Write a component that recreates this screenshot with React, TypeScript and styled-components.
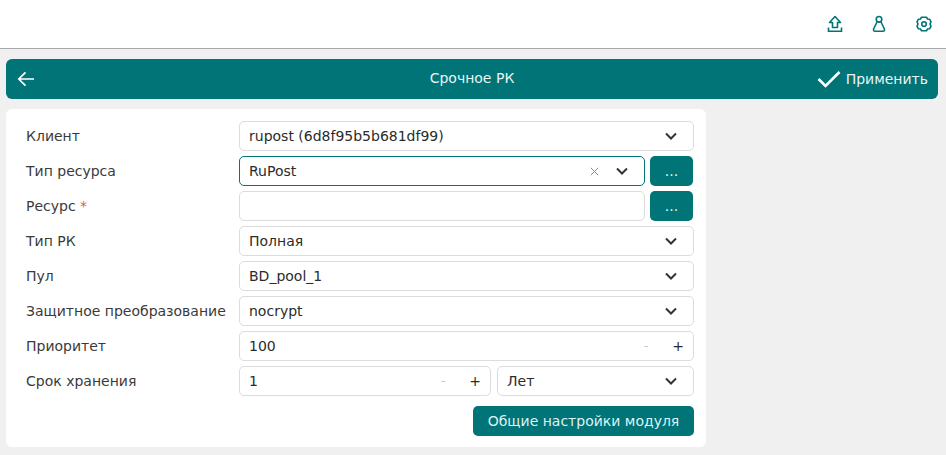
import React from "react";
import styled, { createGlobalStyle } from "styled-components";

const Global = createGlobalStyle`
  html, body { margin: 0; padding: 0; background: #f0f0f0; }
  body { font-family: "DejaVu Sans", sans-serif; font-size: 14px; color: #333; }
`;
const Page = styled.div`
  width: 946px; height: 455px; overflow: hidden; display: flex; flex-direction: column;
`;
const TopBar = styled.header`
  height: 48px; background: #fff; border-bottom: 1px solid #a8a8ac; display: flex;
  align-items: center; justify-content: flex-end; gap: 26px; padding-right: 13px; flex: none; color: #007476;
`;
const IconBox = styled.span`
  width: 18px; height: 18px; display: flex; align-items: center; justify-content: center;
`;
const Content = styled.main`
  padding: 10px 8px 0 6px; display: flex; flex-direction: column; gap: 10px;
`;
const TitleBar = styled.div`
  height: 40px; background: #007476; border-radius: 6px; color: #fff; display: grid;
  grid-template-columns: 1fr auto 1fr; align-items: center; padding: 0 10px 0 11px;
`;
const TitleText = styled.div` font-size: 14px; color: #e8f6f6; margin: -2px 1px 0 0; `;
const Apply = styled.div`
  justify-self: end; display: flex; align-items: center; gap: 5px; font-size: 14px; color: #e8f6f6;
`;
const Card = styled.section`
  width: 700px; height: 338px; box-sizing: border-box; background: #fff; border-radius: 6px;
  padding: 12px 12px 0 20px; display: flex; flex-direction: column; gap: 5px;
`;
const Row = styled.div`
  display: grid; grid-template-columns: 213px 1fr; align-items: center; height: 30px;
`;
const Label = styled.div` color: #3a3a3a; white-space: nowrap; `;
const Star = styled.span` color: #d9604c; `;
const Controls = styled.div` display: flex; gap: 5px; min-width: 0; `;
const SplitControls = styled(Controls)` gap: 6px; `;
const Field = styled.div<{ $focus?: boolean; $w?: number }>`
  height: 30px; box-sizing: border-box; border: 1px solid ${p => (p.$focus ? "#007476" : "#dcdcdc")};
  border-radius: 5px; background: #fff; display: flex; align-items: center; padding: 0 15px 0 9px;
  color: #2b2b2b; ${p => (p.$w ? `width: ${p.$w}px; flex: none;` : "flex: 1; min-width: 0;")}
`;
const Value = styled.span` flex: 1; white-space: nowrap; `;
const Clear = styled.span` display: flex; margin-right: 16px; color: #8a8a8a; `;
const Chevron = styled.span` display: flex; color: #333; `;
const Minus = styled.span` color: #c4c4c4; margin-right: 24px; font-size: 12px; `;
const Plus = styled.span` color: #2b2b2b; font-size: 14px; margin-right: -6px; `;
const Dots = styled.button`
  width: 43px; height: 30px; flex: none; border: 0; border-radius: 5px; background: #007476; color: #e8f6f6;
  font: 14px "DejaVu Sans", sans-serif; padding: 0;
`;
const Footer = styled.div` display: flex; justify-content: flex-end; margin-top: 5px; `;
const Primary = styled.button`
  height: 30px; width: 221px; border: 0; border-radius: 5px; background: #007476; color: #dff3f3;
  font: 14px "DejaVu Sans", sans-serif; padding: 0;
`;

const ChevronIcon = () => (
  <svg width="14" height="10" viewBox="0 0 14 10" fill="none" stroke="currentColor" strokeWidth="2">
    <path d="M2 2.5 7 7.5 12 2.5" />
  </svg>
);

const Select = ({ value, w }: { value: string; w?: number }) => (
  <Field $w={w}>
    <Value>{value}</Value>
    <Chevron><ChevronIcon /></Chevron>
  </Field>
);
const Num = ({ value, w }: { value: string; w?: number }) => (
  <Field $w={w}>
    <Value>{value}</Value>
    <Minus>-</Minus>
    <Plus>+</Plus>
  </Field>
);

export default function App() {
  return (
    <Page>
      <Global />
      <TopBar>
        <IconBox>
          <svg width="16" height="18" viewBox="0 0 16 18" fill="none" stroke="currentColor" strokeWidth="1.6" style={{ marginLeft: -2 }}>
            <path d="M8 1.5 2.5 7.5H5.5V12.5H10.5V7.5H13.5Z" strokeLinejoin="round" />
            <path d="M1.5 12.5V16.2H14.5V12.5" />
          </svg>
        </IconBox>
        <IconBox>
          <svg width="14" height="18" viewBox="0 0 14 18" fill="none" stroke="currentColor" strokeWidth="1.6" style={{ marginLeft: -2 }}>
            <circle cx="7" cy="4.3" r="2.8" />
            <path d="M5 7 1.8 13.5C1.2 15 1.6 16.3 3 16.3H11C12.4 16.3 12.8 15 12.2 13.5L9 7" />
          </svg>
        </IconBox>
        <IconBox>
          <svg width="16" height="16" viewBox="0 0 16 16" fill="none" stroke="currentColor" strokeWidth="1.6">
            <path d="M5.5 1.2H10.5L11.5 3 13.6 3.2 15 5.8 13.9 8 15 10.2 13.6 12.8 11.5 13 10.5 14.8H5.5L4.5 13 2.4 12.8 1 10.2 2.1 8 1 5.8 2.4 3.2 4.5 3Z" strokeLinejoin="round" />
            <circle cx="8" cy="8" r="2.3" />
          </svg>
        </IconBox>
      </TopBar>
      <Content>
        <TitleBar>
          <svg width="18" height="16" viewBox="0 0 18 16" fill="none" stroke="#fff" strokeWidth="1.7">
            <path d="M17 8H2M8.5 1.3 1.8 8 8.5 14.7" />
          </svg>
          <TitleText>Срочное РК</TitleText>
          <Apply>
            <svg width="24" height="18" viewBox="0 0 24 18" fill="none" stroke="#fff" strokeWidth="2.6">
              <path d="M1.5 9 8.5 16 22.5 2" />
            </svg>
            Применить
          </Apply>
        </TitleBar>
        <Card>
          <Row>
            <Label>Клиент</Label>
            <Controls><Select value="rupost (6d8f95b5b681df99)" /></Controls>
          </Row>
          <Row>
            <Label>Тип ресурса</Label>
            <Controls>
              <Field $focus $w={406}>
                <Value>RuPost</Value>
                <Clear>
                  <svg width="9" height="9" viewBox="0 0 9 9" stroke="currentColor" strokeWidth="1"><path d="M.8.8 8.2 8.2M8.2.8.8 8.2" /></svg>
                </Clear>
                <Chevron><ChevronIcon /></Chevron>
              </Field>
              <Dots>...</Dots>
            </Controls>
          </Row>
          <Row>
            <Label>Ресурс <Star>*</Star></Label>
            <Controls>
              <Field $w={406} />
              <Dots>...</Dots>
            </Controls>
          </Row>
          <Row>
            <Label>Тип РК</Label>
            <Controls><Select value="Полная" /></Controls>
          </Row>
          <Row>
            <Label>Пул</Label>
            <Controls><Select value="BD_pool_1" /></Controls>
          </Row>
          <Row>
            <Label>Защитное преобразование</Label>
            <Controls><Select value="nocrypt" /></Controls>
          </Row>
          <Row>
            <Label>Приоритет</Label>
            <Controls><Num value="100" /></Controls>
          </Row>
          <Row>
            <Label>Срок хранения</Label>
            <SplitControls>
              <Num value="1" w={252} />
              <Select value="Лет" w={197} />
            </SplitControls>
          </Row>
          <Footer><Primary>Общие настройки модуля</Primary></Footer>
        </Card>
      </Content>
    </Page>
  );
}
